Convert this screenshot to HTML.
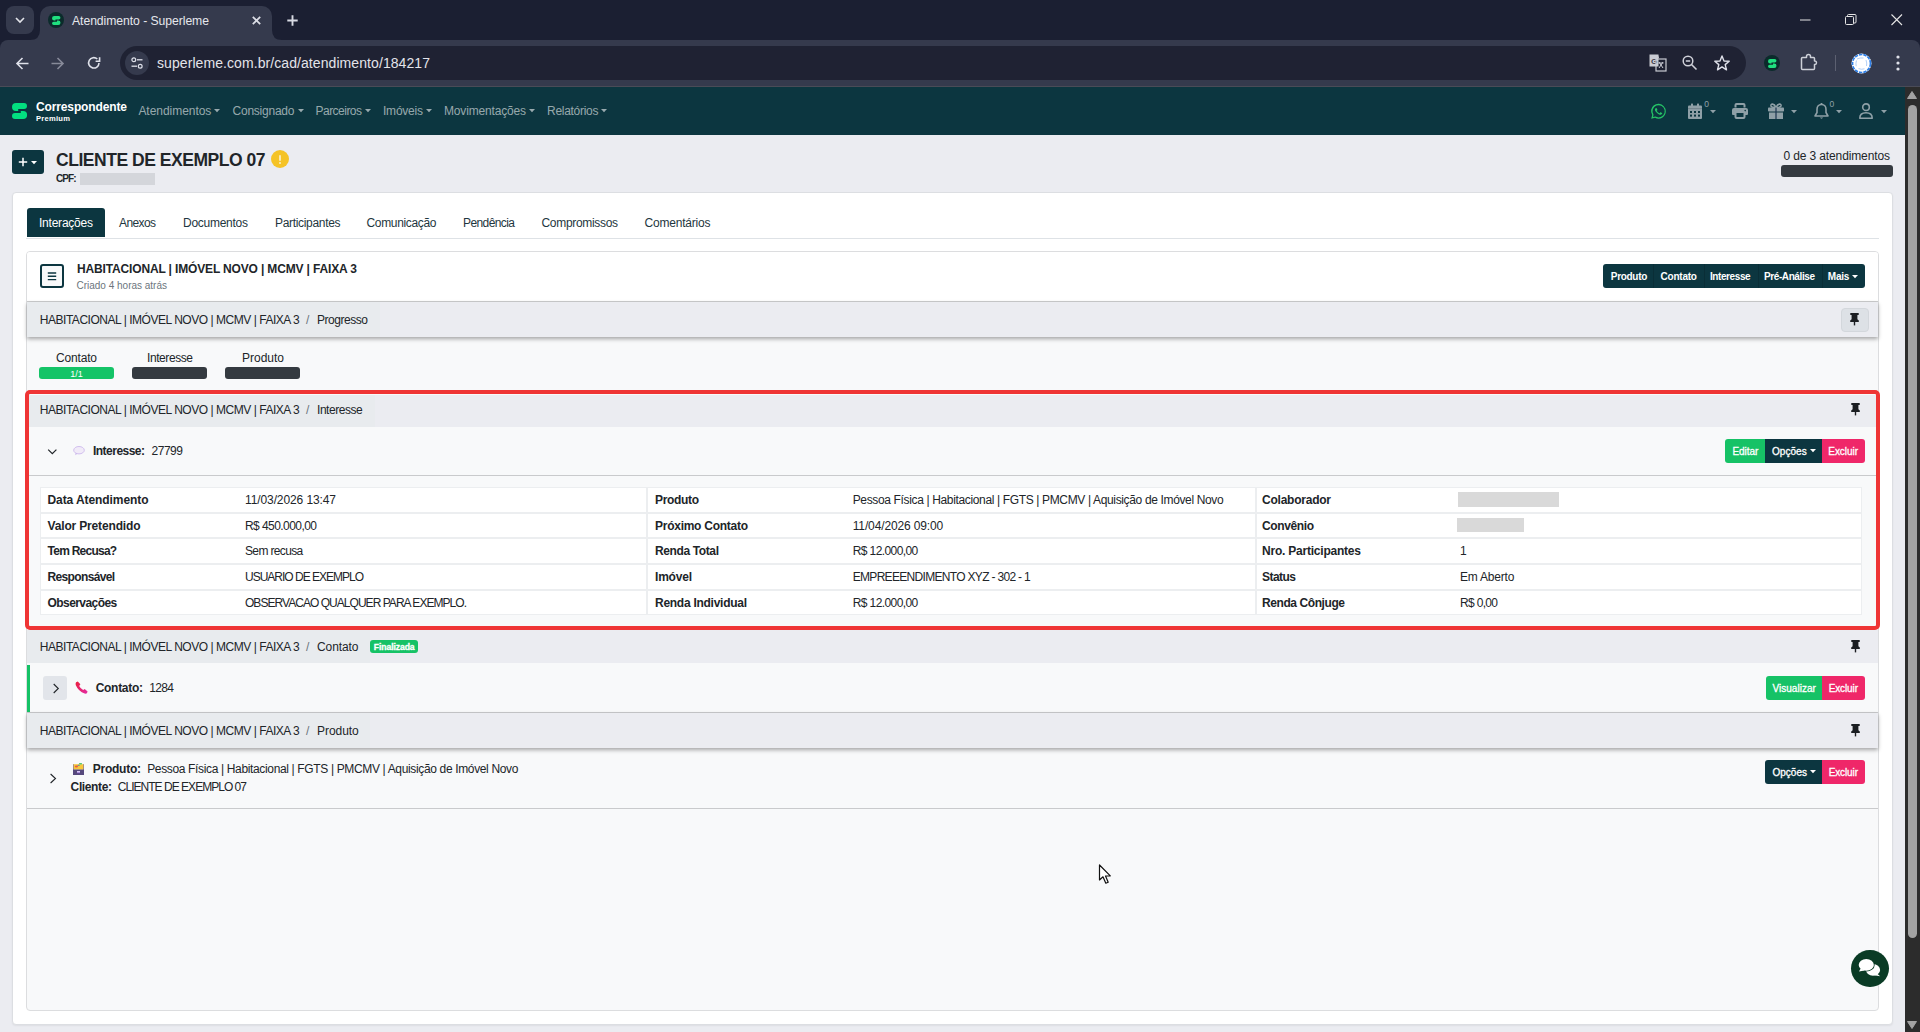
<!DOCTYPE html>
<html><head><meta charset="utf-8"><title>Atendimento - Superleme</title>
<style>
*{box-sizing:border-box;margin:0;padding:0}
html,body{width:1920px;height:1032px;overflow:hidden;background:#ebecf1;font-family:"Liberation Sans",sans-serif}
.t{position:absolute;line-height:1;white-space:nowrap}
.r{position:absolute}
svg{position:absolute;overflow:visible}
</style></head><body>

<div class="r" style="left:0px;top:0px;width:1920px;height:50px;background:#1b1f32"></div>
<div class="r" style="left:6px;top:6px;width:28px;height:28px;background:#353a4d;border-radius:8px"></div>
<svg style="left:15px;top:17px" width="10" height="6"><path d="M1 1 L5 5 L9 1" stroke="#e3e4ea" stroke-width="1.6" fill="none"/></svg>
<div class="r" style="left:0px;top:40px;width:1920px;height:47px;background:#353a4d;border-radius:8px 8px 0 0"></div>
<div class="r" style="left:40px;top:6px;width:232px;height:40px;background:#353a4d;border-radius:10px 10px 0 0"></div>
<svg style="left:30px;top:30px" width="10" height="10"><path d="M0 10 Q10 10 10 0 L10 10 Z" fill="#353a4d"/></svg>
<svg style="left:272px;top:30px" width="10" height="10"><path d="M10 10 Q0 10 0 0 L0 10 Z" fill="#353a4d"/></svg>
<div class="r" style="left:48px;top:12px;width:16px;height:16px;background:#0b2b2b;border-radius:50%"></div>
<svg style="left:51.5px;top:15.5px" width="9" height="9" viewBox="0 0 16 16"><path d="M4 0 H12 A3 3 0 0 1 12 6 H6.2 V8 H4 A4 4 0 0 1 4 0 Z" fill="#1fe07f"/><path d="M11.1 16 H3 A3 3 0 0 1 3 10 H8.8 V8 H11.1 A4 4 0 0 1 11.1 16 Z" fill="#1fe07f"/></svg>
<div class="t " style="left:72px;top:15px;font-size:12.2px;color:#e6e7ec;font-weight:normal;letter-spacing:-0.055px;">Atendimento - Superleme</div>
<svg style="left:252px;top:16px" width="9" height="9"><path d="M0.8 0.8 L8.2 8.2 M8.2 0.8 L0.8 8.2" stroke="#dcdee6" stroke-width="1.7"/></svg>
<svg style="left:287px;top:15px" width="11" height="11"><path d="M5.5 0.3 V10.7 M0.3 5.5 H10.7" stroke="#d8dae3" stroke-width="1.9"/></svg>
<svg style="left:1800px;top:19px" width="11" height="2"><path d="M0 1 H10.5" stroke="#e5e5e5" stroke-width="1"/></svg>
<svg style="left:1845px;top:14px" width="12" height="12"><rect x="0.5" y="2.5" width="8" height="8" rx="1" stroke="#e5e5e5" fill="none"/><path d="M2.5 2.5 V1.5 Q2.5 0.5 3.5 0.5 H10 Q11 0.5 11 1.5 V8 Q11 9 10 9 H8.5" stroke="#e5e5e5" fill="none"/></svg>
<svg style="left:1891px;top:14px" width="12" height="12"><path d="M0.5 0.5 L11 11 M11 0.5 L0.5 11" stroke="#e5e5e5" stroke-width="1.1"/></svg>
<svg style="left:16px;top:57px" width="13" height="13" viewBox="0 0 13 13"><path d="M12.5 6.5 H1.5 M6.5 1 L1 6.5 L6.5 12" stroke="#dfe1ea" stroke-width="1.6" fill="none"/></svg>
<svg style="left:51px;top:57px" width="13" height="13" viewBox="0 0 13 13"><path d="M0.5 6.5 H11.5 M6.5 1 L12 6.5 L6.5 12" stroke="#878a99" stroke-width="1.6" fill="none"/></svg>
<svg style="left:87px;top:56px" width="14" height="14" viewBox="0 0 14 14"><path d="M12 7 A5.2 5.2 0 1 1 10.3 3" stroke="#dfe1ea" stroke-width="1.6" fill="none"/><path d="M12.6 1.2 V5.2 H8.6" stroke="#dfe1ea" stroke-width="1.6" fill="none"/></svg>
<div class="r" style="left:120px;top:46px;width:1626px;height:34px;background:#1f2233;border-radius:17px"></div>
<div class="r" style="left:125px;top:51px;width:24px;height:24px;background:#353a4d;border-radius:50%"></div>
<svg style="left:131px;top:57px" width="12" height="12" viewBox="0 0 12 12"><circle cx="2.8" cy="2.8" r="1.9" stroke="#dfe1ea" stroke-width="1.2" fill="none"/><path d="M6 2.8 H11.5" stroke="#dfe1ea" stroke-width="1.3"/><circle cx="9.2" cy="9.2" r="1.9" stroke="#dfe1ea" stroke-width="1.2" fill="none"/><path d="M0.5 9.2 H6" stroke="#dfe1ea" stroke-width="1.3"/></svg>
<div class="t " style="left:157px;top:56px;font-size:14px;color:#e3e4ea;font-weight:normal;letter-spacing:0.077px;">superleme.com.br/cad/atendimento/184217</div>
<svg style="left:1649px;top:54px" width="18" height="18" viewBox="0 0 18 18"><path d="M1 1 H9 L10 4 H1 Z" fill="#c9cbd3"/><rect x="0.5" y="0.5" width="9" height="12" fill="#c9cbd3"/><text x="2" y="10" font-size="8" font-family="Liberation Sans" fill="#353a4d" font-weight="bold">G</text><rect x="7" y="5" width="10" height="12" fill="none" stroke="#c9cbd3" stroke-width="1.2"/><path d="M10 8 L14 14 M14 8 L10 14 M9.5 9 H14.5" stroke="#c9cbd3" stroke-width="1"/></svg>
<svg style="left:1682px;top:55px" width="16" height="16" viewBox="0 0 16 16"><circle cx="6" cy="6" r="4.8" stroke="#cfd1d9" stroke-width="1.5" fill="none"/><path d="M9.5 9.5 L14.5 14.5" stroke="#cfd1d9" stroke-width="1.6"/><path d="M3.8 6 H8.2" stroke="#dfe1ea" stroke-width="1.4"/></svg>
<svg style="left:1714px;top:55px" width="16" height="16" viewBox="0 0 16 16"><path d="M8 1 L10 6 L15.2 6.3 L11.2 9.6 L12.5 14.8 L8 11.9 L3.5 14.8 L4.8 9.6 L0.8 6.3 L6 6 Z" stroke="#dfe1ea" stroke-width="1.4" fill="none" stroke-linejoin="round"/></svg>
<div class="r" style="left:1764px;top:55px;width:16px;height:16px;background:#0b2b2b;border-radius:50%"></div>
<svg style="left:1767.5px;top:58.5px" width="9" height="9" viewBox="0 0 16 16"><path d="M4 0 H12 A3 3 0 0 1 12 6 H6.2 V8 H4 A4 4 0 0 1 4 0 Z" fill="#1fe07f"/><path d="M11.1 16 H3 A3 3 0 0 1 3 10 H8.8 V8 H11.1 A4 4 0 0 1 11.1 16 Z" fill="#1fe07f"/></svg>
<svg style="left:1800px;top:53px" width="18" height="18" viewBox="0 0 18 18"><path d="M2.5 4.5 H6.5 V3.5 Q6.5 1.5 8.5 1.5 Q10.5 1.5 10.5 3.5 V4.5 H13.5 Q14.5 4.5 14.5 5.5 V8 H15 Q16.5 8 16.5 9.8 Q16.5 11.5 15 11.5 H14.5 V15.5 Q14.5 16.5 13.5 16.5 H2.5 Q1.5 16.5 1.5 15.5 V5.5 Q1.5 4.5 2.5 4.5 Z" stroke="#cdd0d8" stroke-width="1.5" fill="none" stroke-linejoin="round"/></svg>
<div class="r" style="left:1835px;top:55px;width:1px;height:16px;background:#5c6071"></div>
<svg style="left:1851px;top:53px" width="21" height="21" viewBox="0 0 21 21"><circle cx="10.5" cy="10.5" r="10" fill="#fff"/><circle cx="10.5" cy="10.5" r="9" fill="none" stroke="#2f7fe6" stroke-width="1.7" stroke-dasharray="3.4 1"/><circle cx="10.5" cy="10.5" r="7.3" fill="#fff"/><path d="M6 6 Q9 4.5 12.5 5 M15 7 Q16.2 10 15.5 13 M13.5 15.8 Q10.5 16.8 7.5 15.6 M5.2 13.2 Q4.5 10 5.5 7.5" stroke="#8fbaf2" stroke-width="0.7" fill="none"/></svg>
<svg style="left:1896px;top:55px" width="4" height="16"><circle cx="2" cy="2" r="1.6" fill="#dfe1ea"/><circle cx="2" cy="8" r="1.6" fill="#dfe1ea"/><circle cx="2" cy="14" r="1.6" fill="#dfe1ea"/></svg>
<div class="r" style="left:0px;top:86px;width:1920px;height:1px;background:#4a4b57"></div>
<div class="r" style="left:0px;top:87px;width:1905px;height:48px;background:#0c3640"></div>
<svg style="left:12px;top:103px" width="16" height="16" viewBox="0 0 16 16"><path d="M4 0 H12 A3 3 0 0 1 12 6 H6.2 V8 H4 A4 4 0 0 1 4 0 Z" fill="#02df80"/><path d="M11.1 16 H3 A3 3 0 0 1 3 10 H8.8 V8 H11.1 A4 4 0 0 1 11.1 16 Z" fill="#02df80"/></svg>
<div class="t " style="left:36px;top:101px;font-size:12px;color:#ffffff;font-weight:bold;letter-spacing:-0.130px;">Correspondente</div>
<div class="t " style="left:36px;top:115px;font-size:7.6px;color:#ffffff;font-weight:bold;letter-spacing:0.250px;">Premium</div>
<div class="t " style="left:138.4px;top:105px;font-size:12px;color:rgba(255,255,255,.58);font-weight:normal;letter-spacing:-0.036px;">Atendimentos</div>
<div class="t " style="left:232.5px;top:105px;font-size:12px;color:rgba(255,255,255,.58);font-weight:normal;letter-spacing:-0.229px;">Consignado</div>
<div class="t " style="left:315.5px;top:105px;font-size:12px;color:rgba(255,255,255,.58);font-weight:normal;letter-spacing:-0.523px;">Parceiros</div>
<div class="t " style="left:383px;top:105px;font-size:12px;color:rgba(255,255,255,.58);font-weight:normal;letter-spacing:-0.224px;">Imóveis</div>
<div class="t " style="left:444px;top:105px;font-size:12px;color:rgba(255,255,255,.58);font-weight:normal;letter-spacing:-0.171px;">Movimentações</div>
<div class="t " style="left:547px;top:105px;font-size:12px;color:rgba(255,255,255,.58);font-weight:normal;letter-spacing:-0.281px;">Relatórios</div>
<svg style="left:214px;top:109px" width="6" height="4"><path d="M0 0 H6 L3 3.2 Z" fill="rgba(255,255,255,.58)"/></svg>
<svg style="left:297.5px;top:109px" width="6" height="4"><path d="M0 0 H6 L3 3.2 Z" fill="rgba(255,255,255,.58)"/></svg>
<svg style="left:365px;top:109px" width="6" height="4"><path d="M0 0 H6 L3 3.2 Z" fill="rgba(255,255,255,.58)"/></svg>
<svg style="left:425.5px;top:109px" width="6" height="4"><path d="M0 0 H6 L3 3.2 Z" fill="rgba(255,255,255,.58)"/></svg>
<svg style="left:529px;top:109px" width="6" height="4"><path d="M0 0 H6 L3 3.2 Z" fill="rgba(255,255,255,.58)"/></svg>
<svg style="left:600.5px;top:109px" width="6" height="4"><path d="M0 0 H6 L3 3.2 Z" fill="rgba(255,255,255,.58)"/></svg>
<svg style="left:1651px;top:104px" width="15" height="15" viewBox="0 0 16 16"><path d="M13.6 2.3A7.8 7.8 0 0 0 1.3 11.8L0.2 15.8 4.3 14.7A7.8 7.8 0 0 0 15.8 8 7.7 7.7 0 0 0 13.6 2.3ZM8 14.3A6.4 6.4 0 0 1 4.8 13.4L4.5 13.2 2.1 13.9 2.7 11.5 2.6 11.2A6.5 6.5 0 1 1 8 14.3Z" fill="#25c466"/><path d="M11.5 9.5c-.2-.1-1.1-.6-1.3-.6s-.3-.1-.4.1-.5.6-.6.8-.2.1-.4 0a5.2 5.2 0 0 1-2.6-2.3c-.2-.3.2-.3.6-1a.4.4 0 0 0 0-.4l-.6-1.4c-.2-.4-.3-.3-.4-.3h-.4a.7.7 0 0 0-.5.2 2.1 2.1 0 0 0-.7 1.6 3.7 3.7 0 0 0 .8 1.9 8.4 8.4 0 0 0 3.2 2.8c1.2.5 1.7.6 2.3.5a1.9 1.9 0 0 0 1.3-.9 1.6 1.6 0 0 0 .1-.9c0-.1-.2-.2-.4-.3Z" fill="#25c466"/></svg>
<svg style="left:1688px;top:103px" width="14" height="16" viewBox="0 0 14 16"><rect x="3" y="0.6" width="2" height="2.6" fill="#8fa0a7"/><rect x="9" y="0.6" width="2" height="2.6" fill="#8fa0a7"/><path d="M0 3.5 Q0 2.5 1 2.5 H13 Q14 2.5 14 3.5 V15 Q14 16 13 16 H1 Q0 16 0 15Z" fill="#8fa0a7"/><rect x="0" y="5.2" width="14" height="0.9" fill="#6f8188"/><g fill="#0c3640"><rect x="2" y="8" width="2" height="2"/><rect x="6" y="8" width="2" height="2"/><rect x="10" y="8" width="2" height="2"/><rect x="2" y="11.6" width="2" height="2"/><rect x="6" y="11.6" width="2" height="2"/><rect x="10" y="11.6" width="2" height="2"/></g></svg>
<div class="t " style="left:1704.3px;top:100px;font-size:8.5px;color:#8fa0a7;font-weight:normal;">0</div>
<svg style="left:1710px;top:110px" width="6" height="4"><path d="M0 0 H6 L3 3.2 Z" fill="#8fa0a7"/></svg>
<svg style="left:1732px;top:103px" width="16" height="16" viewBox="0 0 16 16"><path d="M3.5 4.5 V2 Q3.5 1 4.5 1 H11.5 Q12.5 1 12.5 2 V4.5" stroke="#8fa0a7" stroke-width="2" fill="none"/><path d="M0 7 Q0 5 2 5 H14 Q16 5 16 7 V11 Q16 12 15 12 H13 V10 H3 V12 H1 Q0 12 0 11Z" fill="#8fa0a7"/><path d="M3.5 10 V14 Q3.5 15 4.5 15 H11.5 Q12.5 15 12.5 14 V10" stroke="#8fa0a7" stroke-width="2" fill="none"/><circle cx="13.2" cy="7.6" r="0.8" fill="#0c3640"/></svg>
<svg style="left:1768px;top:103px" width="16" height="16" viewBox="0 0 16 16"><path d="M8 4.5 C6 0 2.5 0.5 3 3 C3.3 4.3 5 4.5 8 4.5 C11 4.5 12.7 4.3 13 3 C13.5 0.5 10 0 8 4.5Z" stroke="#8fa0a7" stroke-width="1.6" fill="none"/><rect x="0" y="4.5" width="16" height="4" rx="0.8" fill="#8fa0a7"/><rect x="1" y="9.5" width="14" height="6.5" fill="#8fa0a7"/><rect x="7.4" y="4.5" width="1.2" height="11.5" fill="#1d3550"/></svg>
<svg style="left:1791px;top:110px" width="6" height="4"><path d="M0 0 H6 L3 3.2 Z" fill="#8fa0a7"/></svg>
<svg style="left:1814px;top:102px" width="15" height="18" viewBox="0 0 15 18"><path d="M7.5 1 V2" stroke="#8fa0a7" stroke-width="1.8"/><path d="M7.5 2.5 C4.3 2.5 3 5 3 7.5 V10.5 L1 14 H14 L12 10.5 V7.5 C12 5 10.7 2.5 7.5 2.5Z" stroke="#8fa0a7" stroke-width="1.6" fill="none" stroke-linejoin="round"/><path d="M5.8 15.5 Q7.5 17.8 9.2 15.5Z" fill="#8fa0a7"/></svg>
<div class="t " style="left:1829.6px;top:100px;font-size:8.5px;color:#8fa0a7;font-weight:normal;">0</div>
<svg style="left:1836px;top:110px" width="6" height="4"><path d="M0 0 H6 L3 3.2 Z" fill="#8fa0a7"/></svg>
<svg style="left:1859px;top:103px" width="14" height="16" viewBox="0 0 14 16"><circle cx="7" cy="4.2" r="3.3" stroke="#8fa0a7" stroke-width="1.6" fill="none"/><path d="M0.8 15.2 Q0.8 9.8 7 9.8 Q13.2 9.8 13.2 15.2 Z" stroke="#8fa0a7" stroke-width="1.6" fill="none" stroke-linejoin="round"/></svg>
<svg style="left:1881px;top:110px" width="6" height="4"><path d="M0 0 H6 L3 3.2 Z" fill="#8fa0a7"/></svg>
<div class="r" style="left:12px;top:150px;width:32px;height:24px;background:#0c3640;border-radius:3px"></div>
<svg style="left:18px;top:157px" width="10" height="10"><path d="M5 0.8 V9.2 M0.8 5 H9.2" stroke="#fff" stroke-width="1.5"/></svg>
<svg style="left:31px;top:161px" width="6" height="4"><path d="M0 0 H6 L3 3.3Z" fill="#fff"/></svg>
<div class="t " style="left:56px;top:152px;font-size:17.5px;color:#212529;font-weight:bold;letter-spacing:-0.465px;">CLIENTE DE EXEMPLO 07</div>
<div class="r" style="left:271px;top:150px;width:18px;height:18px;background:#f5c326;border-radius:50%"></div>
<svg style="left:278px;top:154px" width="4" height="11"><path d="M2 1.3 V6.8" stroke="rgba(255,255,255,.85)" stroke-width="1.5"/><rect x="1.2" y="8.2" width="1.6" height="1.6" fill="rgba(255,255,255,.85)"/></svg>
<div class="t " style="left:56px;top:174px;font-size:10px;color:#212529;font-weight:bold;letter-spacing:-0.948px;">CPF:</div>
<div class="r" style="left:80px;top:173px;width:75px;height:12px;background:#d4d6db"></div>
<div class="t " style="left:1783.4px;top:150px;font-size:12px;color:#212529;font-weight:normal;letter-spacing:-0.119px;">0 de 3 atendimentos</div>
<div class="r" style="left:1781px;top:165px;width:112px;height:12px;background:#343a40;border-radius:3px"></div>
<div class="r" style="left:12px;top:192px;width:1881px;height:833px;background:#fff;border:1px solid #dcdee2;border-radius:4px;box-shadow:0 1px 2px rgba(0,0,0,.06)"></div>
<div class="r" style="left:27px;top:208px;width:78px;height:29px;background:#0c3640;border-radius:3px 3px 0 0"></div>
<div class="t " style="left:39px;top:217px;font-size:12px;color:#fff;font-weight:normal;letter-spacing:-0.227px;">Interações</div>
<div class="t " style="left:119px;top:217px;font-size:12px;color:#1e3640;font-weight:normal;letter-spacing:-0.606px;">Anexos</div>
<div class="t " style="left:183px;top:217px;font-size:12px;color:#1e3640;font-weight:normal;letter-spacing:-0.264px;">Documentos</div>
<div class="t " style="left:275px;top:217px;font-size:12px;color:#1e3640;font-weight:normal;letter-spacing:-0.323px;">Participantes</div>
<div class="t " style="left:366.5px;top:217px;font-size:12px;color:#1e3640;font-weight:normal;letter-spacing:-0.338px;">Comunicação</div>
<div class="t " style="left:463px;top:217px;font-size:12px;color:#1e3640;font-weight:normal;letter-spacing:-0.590px;">Pendência</div>
<div class="t " style="left:541.5px;top:217px;font-size:12px;color:#1e3640;font-weight:normal;letter-spacing:-0.320px;">Compromissos</div>
<div class="t " style="left:644.5px;top:217px;font-size:12px;color:#1e3640;font-weight:normal;letter-spacing:-0.203px;">Comentários</div>
<div class="r" style="left:26px;top:238px;width:1853px;height:1px;background:#dee2e6"></div>
<div class="r" style="left:26px;top:251px;width:1853px;height:760px;background:#f8f9fa;border:1px solid #dcdddf;border-radius:4px"></div>
<div class="r" style="left:27px;top:252px;width:1851px;height:49px;background:#fff;border-radius:3px 3px 0 0"></div>
<div class="r" style="left:27px;top:301px;width:1851px;height:1px;background:#cdcecf"></div>
<div class="r" style="left:40px;top:264px;width:24px;height:24px;background:#f8f9fa;border:2px solid #0c3640;border-radius:3px"></div>
<svg style="left:47px;top:272px" width="10" height="9"><path d="M0.8 1 H9.2 M0.8 4.3 H9.2 M0.8 7.6 H9.2" stroke="#0c3640" stroke-width="1.4"/></svg>
<div class="t " style="left:77px;top:263px;font-size:12px;color:#212529;font-weight:bold;letter-spacing:-0.150px;">HABITACIONAL | IMÓVEL NOVO | MCMV | FAIXA 3</div>
<div class="t " style="left:76.5px;top:281px;font-size:10px;color:#6c757d;font-weight:normal;letter-spacing:-0.006px;">Criado 4 horas atrás</div>
<div class="r" style="left:1603px;top:264px;width:262px;height:24px;background:#0c3640;border-radius:3px"></div>
<div class="r" style="left:1653px;top:264px;width:1px;height:24px;background:rgba(0,0,0,.14)"></div>
<div class="r" style="left:1703.5px;top:264px;width:1px;height:24px;background:rgba(0,0,0,.14)"></div>
<div class="r" style="left:1757.5px;top:264px;width:1px;height:24px;background:rgba(0,0,0,.14)"></div>
<div class="r" style="left:1821.5px;top:264px;width:1px;height:24px;background:rgba(0,0,0,.14)"></div>
<div class="t " style="left:1610.8px;top:272px;font-size:10px;color:#fff;font-weight:bold;letter-spacing:-0.305px;">Produto</div>
<div class="t " style="left:1660.6px;top:272px;font-size:10px;color:#fff;font-weight:bold;letter-spacing:-0.230px;">Contato</div>
<div class="t " style="left:1710px;top:272px;font-size:10px;color:#fff;font-weight:bold;letter-spacing:-0.415px;">Interesse</div>
<div class="t " style="left:1764px;top:272px;font-size:10px;color:#fff;font-weight:bold;letter-spacing:-0.403px;">Pré-Análise</div>
<div class="t " style="left:1827.8px;top:272px;font-size:10px;color:#fff;font-weight:bold;letter-spacing:-0.211px;">Mais</div>
<svg style="left:1852px;top:275px" width="6" height="4"><path d="M0 0 H6 L3 3.2Z" fill="#fff"/></svg>
<div class="r" style="left:27px;top:302px;width:1851px;height:35px;background:#ebecf1;box-shadow:0 2px 4px rgba(0,0,0,.34)"></div>
<div class="r" style="left:27px;top:302px;width:353px;height:35px;background:#e8ebee"></div>
<div class="t " style="left:39.75px;top:314px;font-size:12px;color:#212529;font-weight:normal;letter-spacing:-0.468px;">HABITACIONAL | IMÓVEL NOVO | MCMV | FAIXA 3</div>
<div class="t " style="left:306px;top:314px;font-size:12px;color:#6c757d;font-weight:normal;letter-spacing:0.656px;">/</div>
<div class="t " style="left:317px;top:314px;font-size:12px;color:#212529;font-weight:normal;letter-spacing:-0.463px;">Progresso</div>
<div class="r" style="left:1841px;top:308px;width:28px;height:24px;background:#dde1e6;border:1px solid #d3d7dc;border-radius:4px"></div>
<svg style="left:1850px;top:313px" width="9" height="13" viewBox="0 0 9 13"><path d="M0.3 0 H8.7 V2 H7.4 V6.3 L8.8 7.6 V9 H0.2 V7.6 L1.6 6.3 V2 H0.3Z" fill="#1b1e22"/><path d="M4.5 9 V12.4" stroke="#1b1e22" stroke-width="1.4"/></svg>
<div class="t " style="left:56px;top:352px;font-size:12px;color:#212529;font-weight:normal;letter-spacing:-0.172px;">Contato</div>
<div class="t " style="left:147px;top:352px;font-size:12px;color:#212529;font-weight:normal;letter-spacing:-0.420px;">Interesse</div>
<div class="t " style="left:242px;top:352px;font-size:12px;color:#212529;font-weight:normal;letter-spacing:-0.005px;">Produto</div>
<div class="r" style="left:39px;top:367px;width:75px;height:12px;background:#14c467;border-radius:3px"></div>
<div class="t" style="left:-223.5px;width:600px;text-align:center;top:370px;font-size:9px;color:#fff;font-weight:normal;">1/1</div>
<div class="r" style="left:132px;top:367px;width:75px;height:12px;background:#343a40;border-radius:3px"></div>
<div class="r" style="left:225px;top:367px;width:75px;height:12px;background:#343a40;border-radius:3px"></div>
<div class="r" style="left:27px;top:395px;width:1851px;height:32px;background:#ebecf1"></div>
<div class="r" style="left:27px;top:395px;width:348px;height:32px;background:#e8ebee"></div>
<div class="t " style="left:39.75px;top:404px;font-size:12px;color:#212529;font-weight:normal;letter-spacing:-0.468px;">HABITACIONAL | IMÓVEL NOVO | MCMV | FAIXA 3</div>
<div class="t " style="left:306px;top:404px;font-size:12px;color:#6c757d;font-weight:normal;letter-spacing:0.656px;">/</div>
<div class="t " style="left:317px;top:404px;font-size:12px;color:#212529;font-weight:normal;letter-spacing:-0.451px;">Interesse</div>
<svg style="left:1851px;top:403px" width="9" height="13" viewBox="0 0 9 13"><path d="M0.3 0 H8.7 V2 H7.4 V6.3 L8.8 7.6 V9 H0.2 V7.6 L1.6 6.3 V2 H0.3Z" fill="#1b1e22"/><path d="M4.5 9 V12.4" stroke="#1b1e22" stroke-width="1.4"/></svg>
<div class="r" style="left:27px;top:475px;width:1851px;height:1px;background:#c9cacc"></div>
<svg style="left:47px;top:448px" width="11" height="8"><path d="M1.2 1.6 L5.3 5.6 L9.4 1.6" stroke="#212529" stroke-width="1.25" fill="none"/></svg>
<svg style="left:73px;top:446px" width="12" height="10" viewBox="0 0 12 10"><ellipse cx="6" cy="4.2" rx="5.3" ry="3.7" fill="#f1ebf8" stroke="#cdb9ec" stroke-width="0.9"/><path d="M2.6 7 L2.3 9.3 L4.3 7.7Z" fill="#c9b3ea"/></svg>
<div class="t " style="left:93px;top:445px;font-size:12px;color:#212529;font-weight:bold;letter-spacing:-0.523px;">Interesse:</div>
<div class="t " style="left:151.5px;top:445px;font-size:12px;color:#212529;font-weight:normal;letter-spacing:-0.469px;">27799</div>
<div class="r" style="left:1725px;top:439px;width:40px;height:24px;background:#16c266;border-radius:3px 0 0 3px"></div>
<div class="r" style="left:1765px;top:439px;width:57px;height:24px;background:#0c3640"></div>
<div class="r" style="left:1822px;top:439px;width:43px;height:24px;background:#ef2769;border-radius:0 3px 3px 0"></div>
<div class="t " style="left:1732.5px;top:447px;font-size:10px;color:#fff;font-weight:normal;letter-spacing:-0.065px;-webkit-text-stroke:0.3px #fff;">Editar</div>
<div class="t " style="left:1772px;top:447px;font-size:10px;color:#fff;font-weight:normal;letter-spacing:0.046px;-webkit-text-stroke:0.3px #fff;">Opções</div>
<svg style="left:1810px;top:449px" width="6" height="4"><path d="M0 0 H6 L3 3.2Z" fill="#fff"/></svg>
<div class="t " style="left:1828.3px;top:447px;font-size:10px;color:#fff;font-weight:normal;letter-spacing:-0.053px;-webkit-text-stroke:0.3px #fff;">Excluir</div>
<div class="r" style="left:40px;top:487px;width:1822px;height:128px;background:#eceef0"></div>
<div class="r" style="left:41px;top:488px;width:605px;height:24px;background:#fff"></div>
<div class="r" style="left:648px;top:488px;width:607px;height:24px;background:#fff"></div>
<div class="r" style="left:1257px;top:488px;width:604px;height:24px;background:#fff"></div>
<div class="r" style="left:41px;top:514px;width:605px;height:23px;background:#fff"></div>
<div class="r" style="left:648px;top:514px;width:607px;height:23px;background:#fff"></div>
<div class="r" style="left:1257px;top:514px;width:604px;height:23px;background:#fff"></div>
<div class="r" style="left:41px;top:539px;width:605px;height:24px;background:#fff"></div>
<div class="r" style="left:648px;top:539px;width:607px;height:24px;background:#fff"></div>
<div class="r" style="left:1257px;top:539px;width:604px;height:24px;background:#fff"></div>
<div class="r" style="left:41px;top:565px;width:605px;height:24px;background:#fff"></div>
<div class="r" style="left:648px;top:565px;width:607px;height:24px;background:#fff"></div>
<div class="r" style="left:1257px;top:565px;width:604px;height:24px;background:#fff"></div>
<div class="r" style="left:41px;top:591px;width:605px;height:23px;background:#fff"></div>
<div class="r" style="left:648px;top:591px;width:607px;height:23px;background:#fff"></div>
<div class="r" style="left:1257px;top:591px;width:604px;height:23px;background:#fff"></div>
<div class="t " style="left:47.5px;top:494px;font-size:12px;color:#212529;font-weight:bold;letter-spacing:-0.082px;">Data Atendimento</div>
<div class="t " style="left:245px;top:494px;font-size:12px;color:#212529;font-weight:normal;letter-spacing:-0.102px;">11/03/2026 13:47</div>
<div class="t " style="left:47.5px;top:520px;font-size:12px;color:#212529;font-weight:bold;letter-spacing:-0.157px;">Valor Pretendido</div>
<div class="t " style="left:245px;top:520px;font-size:12px;color:#212529;font-weight:normal;letter-spacing:-0.561px;">R$ 450.000,00</div>
<div class="t " style="left:47.5px;top:545px;font-size:12px;color:#212529;font-weight:bold;letter-spacing:-0.744px;">Tem Recusa?</div>
<div class="t " style="left:245px;top:545px;font-size:12px;color:#212529;font-weight:normal;letter-spacing:-0.637px;">Sem recusa</div>
<div class="t " style="left:47.5px;top:571px;font-size:12px;color:#212529;font-weight:bold;letter-spacing:-0.635px;">Responsável</div>
<div class="t " style="left:245px;top:571px;font-size:12px;color:#212529;font-weight:normal;letter-spacing:-1.002px;">USUARIO DE EXEMPLO</div>
<div class="t " style="left:47.5px;top:597px;font-size:12px;color:#212529;font-weight:bold;letter-spacing:-0.569px;">Observações</div>
<div class="t " style="left:245px;top:597px;font-size:12px;color:#212529;font-weight:normal;letter-spacing:-0.961px;">OBSERVACAO QUALQUER PARA EXEMPLO.</div>
<div class="t " style="left:655px;top:494px;font-size:12px;color:#212529;font-weight:bold;letter-spacing:-0.333px;">Produto</div>
<div class="t " style="left:852.7px;top:494px;font-size:12px;color:#212529;font-weight:normal;letter-spacing:-0.352px;">Pessoa Física | Habitacional | FGTS | PMCMV | Aquisição de Imóvel Novo</div>
<div class="t " style="left:655px;top:520px;font-size:12px;color:#212529;font-weight:bold;letter-spacing:-0.262px;">Próximo Contato</div>
<div class="t " style="left:852.7px;top:520px;font-size:12px;color:#212529;font-weight:normal;letter-spacing:-0.129px;">11/04/2026 09:00</div>
<div class="t " style="left:655px;top:545px;font-size:12px;color:#212529;font-weight:bold;letter-spacing:-0.378px;">Renda Total</div>
<div class="t " style="left:852.7px;top:545px;font-size:12px;color:#212529;font-weight:normal;letter-spacing:-0.588px;">R$ 12.000,00</div>
<div class="t " style="left:655px;top:571px;font-size:12px;color:#212529;font-weight:bold;letter-spacing:-0.203px;">Imóvel</div>
<div class="t " style="left:852.7px;top:571px;font-size:12px;color:#212529;font-weight:normal;letter-spacing:-0.684px;">EMPREEENDIMENTO XYZ - 302 - 1</div>
<div class="t " style="left:655px;top:597px;font-size:12px;color:#212529;font-weight:bold;letter-spacing:-0.268px;">Renda Individual</div>
<div class="t " style="left:852.7px;top:597px;font-size:12px;color:#212529;font-weight:normal;letter-spacing:-0.588px;">R$ 12.000,00</div>
<div class="t " style="left:1262px;top:494px;font-size:12px;color:#212529;font-weight:bold;letter-spacing:-0.234px;">Colaborador</div>
<div class="t " style="left:1262px;top:520px;font-size:12px;color:#212529;font-weight:bold;letter-spacing:-0.382px;">Convênio</div>
<div class="t " style="left:1262px;top:545px;font-size:12px;color:#212529;font-weight:bold;letter-spacing:-0.218px;">Nro. Participantes</div>
<div class="t " style="left:1460px;top:545px;font-size:12px;color:#212529;font-weight:normal;">1</div>
<div class="t " style="left:1262px;top:571px;font-size:12px;color:#212529;font-weight:bold;letter-spacing:-0.537px;">Status</div>
<div class="t " style="left:1460px;top:571px;font-size:12px;color:#212529;font-weight:normal;letter-spacing:-0.216px;">Em Aberto</div>
<div class="t " style="left:1262px;top:597px;font-size:12px;color:#212529;font-weight:bold;letter-spacing:-0.418px;">Renda Cônjuge</div>
<div class="t " style="left:1460px;top:597px;font-size:12px;color:#212529;font-weight:normal;letter-spacing:-0.672px;">R$ 0,00</div>
<div class="r" style="left:1458px;top:492px;width:101px;height:15px;background:#d9d9d9"></div>
<div class="r" style="left:1457px;top:518px;width:67px;height:14px;background:#d9d9d9"></div>
<div class="r" style="left:25px;top:390px;width:1855px;height:240px;border:4px solid #ef3535;border-radius:5px"></div>
<div class="r" style="left:27px;top:630px;width:1851px;height:33px;background:#ebecf1"></div>
<div class="r" style="left:27px;top:630px;width:343px;height:33px;background:#e8ebee"></div>
<div class="t " style="left:39.75px;top:641px;font-size:12px;color:#212529;font-weight:normal;letter-spacing:-0.468px;">HABITACIONAL | IMÓVEL NOVO | MCMV | FAIXA 3</div>
<div class="t " style="left:306px;top:641px;font-size:12px;color:#6c757d;font-weight:normal;letter-spacing:0.656px;">/</div>
<div class="t " style="left:317px;top:641px;font-size:12px;color:#212529;font-weight:normal;letter-spacing:-0.105px;">Contato</div>
<div class="r" style="left:370px;top:640px;width:48px;height:13px;background:#16c266;border-radius:3px"></div>
<div class="t " style="left:373.8px;top:643px;font-size:8.6px;color:#fff;font-weight:bold;letter-spacing:-0.083px;-webkit-text-stroke:0.3px #fff;">Finalizada</div>
<svg style="left:1851px;top:640px" width="9" height="13" viewBox="0 0 9 13"><path d="M0.3 0 H8.7 V2 H7.4 V6.3 L8.8 7.6 V9 H0.2 V7.6 L1.6 6.3 V2 H0.3Z" fill="#1b1e22"/><path d="M4.5 9 V12.4" stroke="#1b1e22" stroke-width="1.4"/></svg>
<div class="r" style="left:27px;top:665px;width:3px;height:47px;background:#16c266"></div>
<div class="r" style="left:27px;top:712px;width:1851px;height:1px;background:#c9cacc"></div>
<div class="r" style="left:43px;top:676px;width:24px;height:24px;background:#e2e5ea;border-radius:3px"></div>
<svg style="left:53px;top:683px" width="7" height="11"><path d="M0.7 1 L5.3 5.5 L0.7 10" stroke="#212529" stroke-width="1.1" fill="none"/></svg>
<svg style="left:75px;top:681px" width="13" height="13" viewBox="0 0 13 13"><defs><linearGradient id="ph" x1="0" y1="0" x2="1" y2="1"><stop offset="0" stop-color="#ea1f3c"/><stop offset="1" stop-color="#e42da6"/></linearGradient></defs><path d="M1.1 1.3 L2.8 0.6 L5.4 3.3 L4.2 4.9 Q5.6 7.6 8.2 9 L9.7 7.9 L12.6 10.6 L11.9 12.3 Q11 12.9 9.6 12.5 Q3.6 10.5 0.7 3.9 Q0.4 2.2 1.1 1.3Z" fill="url(#ph)"/></svg>
<div class="t " style="left:95.7px;top:682px;font-size:12px;color:#212529;font-weight:bold;letter-spacing:-0.290px;">Contato:</div>
<div class="t " style="left:149.3px;top:682px;font-size:12px;color:#212529;font-weight:normal;letter-spacing:-0.668px;">1284</div>
<div class="r" style="left:1766px;top:676px;width:56px;height:24px;background:#16c266;border-radius:3px 0 0 3px"></div>
<div class="r" style="left:1822px;top:676px;width:43px;height:24px;background:#ef2769;border-radius:0 3px 3px 0"></div>
<div class="t " style="left:1772.4px;top:684px;font-size:10px;color:#fff;font-weight:normal;letter-spacing:0.036px;-webkit-text-stroke:0.3px #fff;">Visualizar</div>
<div class="t " style="left:1828.7px;top:684px;font-size:10px;color:#fff;font-weight:normal;letter-spacing:-0.119px;-webkit-text-stroke:0.3px #fff;">Excluir</div>
<div class="r" style="left:27px;top:713px;width:1851px;height:35px;background:#ebecf1;box-shadow:0 2px 4px rgba(0,0,0,.34)"></div>
<div class="r" style="left:27px;top:713px;width:343px;height:35px;background:#e8ebee"></div>
<div class="t " style="left:39.75px;top:725px;font-size:12px;color:#212529;font-weight:normal;letter-spacing:-0.468px;">HABITACIONAL | IMÓVEL NOVO | MCMV | FAIXA 3</div>
<div class="t " style="left:306px;top:725px;font-size:12px;color:#6c757d;font-weight:normal;letter-spacing:0.656px;">/</div>
<div class="t " style="left:317px;top:725px;font-size:12px;color:#212529;font-weight:normal;letter-spacing:-0.055px;">Produto</div>
<svg style="left:1851px;top:724px" width="9" height="13" viewBox="0 0 9 13"><path d="M0.3 0 H8.7 V2 H7.4 V6.3 L8.8 7.6 V9 H0.2 V7.6 L1.6 6.3 V2 H0.3Z" fill="#1b1e22"/><path d="M4.5 9 V12.4" stroke="#1b1e22" stroke-width="1.4"/></svg>
<div class="r" style="left:27px;top:808px;width:1851px;height:1px;background:#c9cacc"></div>
<svg style="left:50px;top:773px" width="7" height="11"><path d="M0.6 1 L5.5 5.5 L0.6 10" stroke="#212529" stroke-width="1.1" fill="none"/></svg>
<svg style="left:73px;top:763px" width="11" height="12" viewBox="0 0 11 12"><rect x="0" y="1.2" width="11" height="5.4" fill="#f7c83c"/><rect x="0" y="1.2" width="0.6" height="10.8" fill="#7a6aa6"/><rect x="10.4" y="1.2" width="0.6" height="10.8" fill="#7a6aa6"/><rect x="0" y="6.5" width="11" height="5.5" fill="#56497c"/><rect x="5.9" y="0" width="3.2" height="1.5" rx="0.7" fill="#5cc873"/><ellipse cx="3.4" cy="3.6" rx="1.6" ry="1" fill="#ec5b3c"/><ellipse cx="5.6" cy="2.3" rx="1.2" ry="0.5" fill="#4d7fb5"/><rect x="4" y="8" width="3" height="1.8" fill="#d8c6f2"/><rect x="4" y="9.6" width="3" height="0.6" fill="#8a5cd8"/></svg>
<div class="t " style="left:92.7px;top:763px;font-size:12px;color:#212529;font-weight:bold;letter-spacing:-0.229px;">Produto:</div>
<div class="t " style="left:147.2px;top:763px;font-size:12px;color:#212529;font-weight:normal;letter-spacing:-0.349px;">Pessoa Física | Habitacional | FGTS | PMCMV | Aquisição de Imóvel Novo</div>
<div class="t " style="left:70.6px;top:781px;font-size:12px;color:#212529;font-weight:bold;letter-spacing:-0.374px;">Cliente:</div>
<div class="t " style="left:117.8px;top:781px;font-size:12px;color:#212529;font-weight:normal;letter-spacing:-0.976px;">CLIENTE DE EXEMPLO 07</div>
<div class="r" style="left:1765px;top:760px;width:57px;height:24px;background:#0c3640;border-radius:3px 0 0 3px"></div>
<div class="r" style="left:1822px;top:760px;width:43px;height:24px;background:#ef2769;border-radius:0 3px 3px 0"></div>
<div class="t " style="left:1772.4px;top:768px;font-size:10px;color:#fff;font-weight:normal;letter-spacing:0.026px;-webkit-text-stroke:0.3px #fff;">Opções</div>
<svg style="left:1810px;top:770px" width="6" height="4"><path d="M0 0 H6 L3 3.2Z" fill="#fff"/></svg>
<div class="t " style="left:1828.7px;top:768px;font-size:10px;color:#fff;font-weight:normal;letter-spacing:-0.119px;-webkit-text-stroke:0.3px #fff;">Excluir</div>
<div class="r" style="left:1851px;top:949.5px;width:38px;height:37.5px;background:#0a3b25;border-radius:50%"></div>
<svg style="left:1858px;top:958px" width="24" height="20" viewBox="0 0 24 20"><ellipse cx="15" cy="11.9" rx="7.1" ry="5.9" fill="#fff"/><path d="M19 15.5 L22.2 18.2 L16 17.2Z" fill="#fff"/><ellipse cx="8.3" cy="6.9" rx="8.4" ry="6.6" fill="#0a3b25"/><ellipse cx="8.3" cy="6.9" rx="7.6" ry="5.9" fill="#fff"/><path d="M2.8 10.3 L1 13.5 L6.8 12.4Z" fill="#fff"/></svg>
<svg style="left:1098px;top:864px" width="14" height="22" viewBox="0 0 14 22"><path d="M1.5 1 V16 L5 12.8 L7.8 19.2 L10.2 18.2 L7.5 12 L12.3 11.8 Z" fill="#fff" stroke="#111" stroke-width="1.2" stroke-linejoin="round"/></svg>
<div class="r" style="left:1905px;top:87px;width:15px;height:945px;background:#2c2c2c"></div>
<svg style="left:1907px;top:91px" width="10" height="8"><path d="M5 0.5 L9.5 7.5 H0.5Z" fill="#a3a3a3" stroke="#a3a3a3" stroke-linejoin="round"/></svg>
<div class="r" style="left:1908px;top:105px;width:9px;height:833px;background:#a3a3a3;border-radius:4.5px"></div>
<svg style="left:1907px;top:1021px" width="10" height="8"><path d="M0.5 0.5 H9.5 L5 7.5Z" fill="#a3a3a3" stroke="#a3a3a3" stroke-linejoin="round"/></svg>
</body></html>
